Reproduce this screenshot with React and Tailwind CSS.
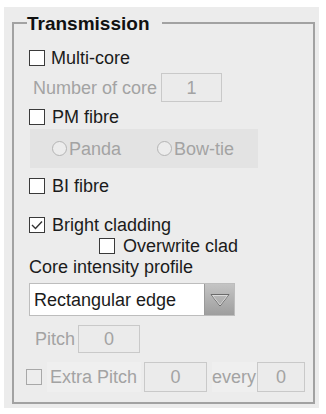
import React from "react";

const F = { fontFamily: '"Liberation Sans", Arial, sans-serif' };

function Box({ checked, disabled }) {
  return (
    <div
      className={
        "w-[16px] h-[16px] shrink-0 border flex items-center justify-center " +
        (disabled ? "border-[#a8a8a8] bg-[#ededed]" : "border-[#3a3a3a] bg-white")
      }
    >
      {checked && (
        <svg width="12" height="10" viewBox="0 0 12 10">
          <path d="M1 5 L4.5 8.5 L11 1.5" fill="none" stroke="#333" strokeWidth="1.4" />
        </svg>
      )}
    </div>
  );
}

function Radio({ label }) {
  return (
    <div className="flex items-center">
      <div className="w-[15px] h-[15px] rounded-full border border-[#b4b4b4] bg-[#ececec]" />
      <span className="ml-[2px] text-[#a3a3a3]">{label}</span>
    </div>
  );
}

function Field({ w, value }) {
  return (
    <div
      className={
        "h-full border border-[#c9c9c9] bg-[#ebebeb] flex items-center justify-center text-[#a3a3a3] " + w
      }
    >
      {value}
    </div>
  );
}

export default function App() {
  return (
    <div className="w-[326px] h-[414px] bg-white overflow-hidden text-[18px] leading-none text-[#1b1b1b]" style={F}>
      <div className="ml-[4px] mt-[7px] w-[315px] h-[401px] bg-[#ececec] pt-[15px] pl-[8px]">
        <div className="relative w-[303px] h-[382px] border-2 border-[#a2a2a2] flex flex-col pl-[15px]">
          <span className="absolute left-[13px] top-[-10px] bg-[#ececec] pr-[12px] font-bold text-[19px] leading-[20px] text-[#111]">
            Transmission
          </span>

          <div className="mt-[25px] h-[17px] flex items-center">
            <Box />
            <span className="ml-[6px]">Multi-core</span>
          </div>

          <div className="mt-[7px] h-[29px] flex items-center">
            <span className="ml-[4px] text-[#a3a3a3] w-[128px] whitespace-nowrap">Number of core</span>
            <Field w="w-[61px]" value="1" />
          </div>

          <div className="mt-[6px] h-[17px] flex items-center">
            <Box />
            <span className="ml-[7px]">PM fibre</span>
          </div>

          <div className="mt-[4px] ml-[1px] w-[228px] h-[39px] bg-[#e3e3e3] flex items-center pl-[22px] gap-[36px]">
            <Radio label="Panda" />
            <Radio label="Bow-tie" />
          </div>

          <div className="mt-[9px] h-[17px] flex items-center">
            <Box />
            <span className="ml-[7px]">BI fibre</span>
          </div>

          <div className="mt-[22px] h-[17px] flex items-center">
            <Box checked />
            <span className="ml-[7px]">Bright cladding</span>
          </div>

          <div className="mt-[4px] ml-[70px] h-[17px] flex items-center">
            <Box />
            <span className="ml-[8px]">Overwrite clad</span>
          </div>

          <div className="mt-[4px] h-[17px] flex items-center">
            <span>Core intensity profile</span>
          </div>

          <div className="mt-[8px] w-[206px] h-[33px] flex border border-[#bdbdbd] bg-white">
            <div className="flex-1 flex items-center pl-[4px] whitespace-nowrap">Rectangular edge</div>
            <div className="w-[30px] h-full bg-gradient-to-b from-[#c4c4c4] to-[#9e9e9e] border-l border-[#9a9a9a] flex items-center justify-center">
              <svg width="22" height="16" viewBox="0 0 22 16">
                <path d="M2 2.5 L20 2.5 L11 14 Z" fill="none" stroke="#6a6a6a" strokeWidth="1" />
                <path d="M3.5 3.5 L18.5 3.5 L11 13 Z" fill="none" stroke="#e4e4e4" strokeWidth="0.8" />
              </svg>
            </div>
          </div>

          <div className="mt-[9px] h-[28px] flex items-center">
            <span className="ml-[6px] w-[43px] text-[#a3a3a3]">Pitch</span>
            <Field w="w-[62px]" value="0" />
          </div>

          <div className="mt-[9px] ml-[-3px] h-[30px] flex items-center">
            <Box disabled />
            <span className="ml-[5px] h-full flex items-center pl-[3px] w-[94px] bg-[#efefef] text-[#a3a3a3] whitespace-nowrap">Extra Pitch</span>
            <div className="ml-[3px] h-full">
              <Field w="w-[63px]" value="0" />
            </div>
            <span className="ml-[5px] h-full flex items-center w-[45px] bg-[#efefef] text-[#a3a3a3]">every</span>
            <Field w="w-[48px]" value="0" />
          </div>
        </div>
      </div>
    </div>
  );
}
